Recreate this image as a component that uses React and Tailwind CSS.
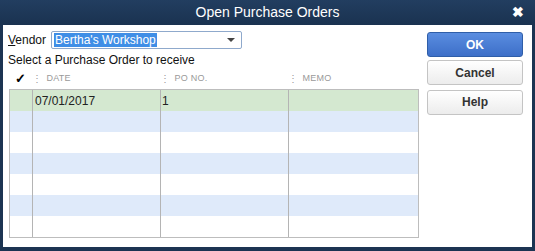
import React from "react";

const rows = [
    { date: "07/01/2017", po: "1", memo: "", bg: "bg-[#d4e8d0]" },
    { bg: "bg-[#dfeafa]" },
    { bg: "bg-white" },
    { bg: "bg-[#dfeafa]" },
    { bg: "bg-white" },
    { bg: "bg-[#dfeafa]" },
    { bg: "bg-white" },
];

function HeaderCell({ label, className }) {
    return (
        <div className={`flex items-center gap-[5px] ${className}`}>
            <span className="text-[10px] leading-none text-[#9a9a9a] tracking-tighter">⋮</span>
            <span className="text-[9px] text-[#9a9a9a] tracking-wide">{label}</span>
        </div>
    );
}

function Button({ children, primary }) {
    return (
        <button
            className={`h-[25px] w-[96px] rounded-[3px] border text-[12px] font-bold ${
                primary
                    ? "border-[#2f5ea8] bg-gradient-to-b from-[#5a8de0] to-[#3d6fc8] text-white"
                    : "border-[#c4c4c4] bg-gradient-to-b from-white to-[#ececec] text-[#333]"
            }`}
        >
            {children}
        </button>
    );
}

export default function App() {
    return (
        <div
            className="w-[535px] h-[251px] flex flex-col bg-[#1c3452] overflow-hidden"
            style={{ fontFamily: '"Liberation Sans", Arial, sans-serif' }}
        >
            <div className="relative h-[25px] flex items-center justify-center bg-gradient-to-b from-[#223e60] to-[#1a3250]">
                <span className="text-[14px] text-white">Open Purchase Orders</span>
                <span className="absolute right-[11px] top-[5px] text-[14px] font-bold leading-none text-white">✖</span>
            </div>

            <div className="flex-1 mx-[3px] mb-[4px] bg-white flex pt-[6px] pl-[5px]">
                <div className="w-[411px] flex flex-col">
                    <div className="flex items-center h-[18px]">
                        <span className="text-[12px] text-[#111] w-[43px]">
                            <span className="underline">V</span>endor
                        </span>
                        <div className="relative w-[191px] h-[18px] border border-[#8fa9cc] rounded-[2px] flex items-center pl-[2px]">
                            <span className="bg-[#3f8ee6] text-white text-[12px] leading-[14px] px-[1px]">
                                Bertha's Workshop
                            </span>
                            <span className="absolute right-[6px] top-[6px] w-0 h-0 border-l-[4px] border-r-[4px] border-t-[4px] border-l-transparent border-r-transparent border-t-[#444]" />
                        </div>
                    </div>
                    <div className="mt-[4px] text-[12px] text-[#111] leading-[14px]">
                        Select a Purchase Order to receive
                    </div>
                    <div className="flex items-center h-[20px] mt-[2px] ml-[1px]">
                        <div className="w-[23px] flex justify-center text-[13px] font-bold text-black">✓</div>
                        <HeaderCell label="DATE" className="w-[128px]" />
                        <HeaderCell label="PO NO." className="w-[128px]" />
                        <HeaderCell label="MEMO" className="flex-1" />
                    </div>
                    <div className="ml-[1px] w-[410px] border border-[#bdbdbd] flex flex-col">
                        {rows.map((r, i) => (
                            <div key={i} className={`flex h-[21px] text-[12px] text-[#222] ${r.bg}`}>
                                <div className="w-[23px] border-r border-[#b4b4b4]" />
                                <div className="w-[128px] border-r border-[#b4b4b4] pl-[2px] flex items-center">
                                    {r.date}
                                </div>
                                <div className="w-[128px] border-r border-[#b4b4b4] pl-[1px] flex items-center">
                                    {r.po}
                                </div>
                                <div className="flex-1">{r.memo}</div>
                            </div>
                        ))}
                    </div>
                </div>
                <div className="ml-auto mr-[9px] flex flex-col gap-[3px] pt-[1px]">
                    <Button primary>OK</Button>
                    <Button>Cancel</Button>
                    <div className="mt-[1px]">
                        <Button>Help</Button>
                    </div>
                </div>
            </div>
        </div>
    );
}
